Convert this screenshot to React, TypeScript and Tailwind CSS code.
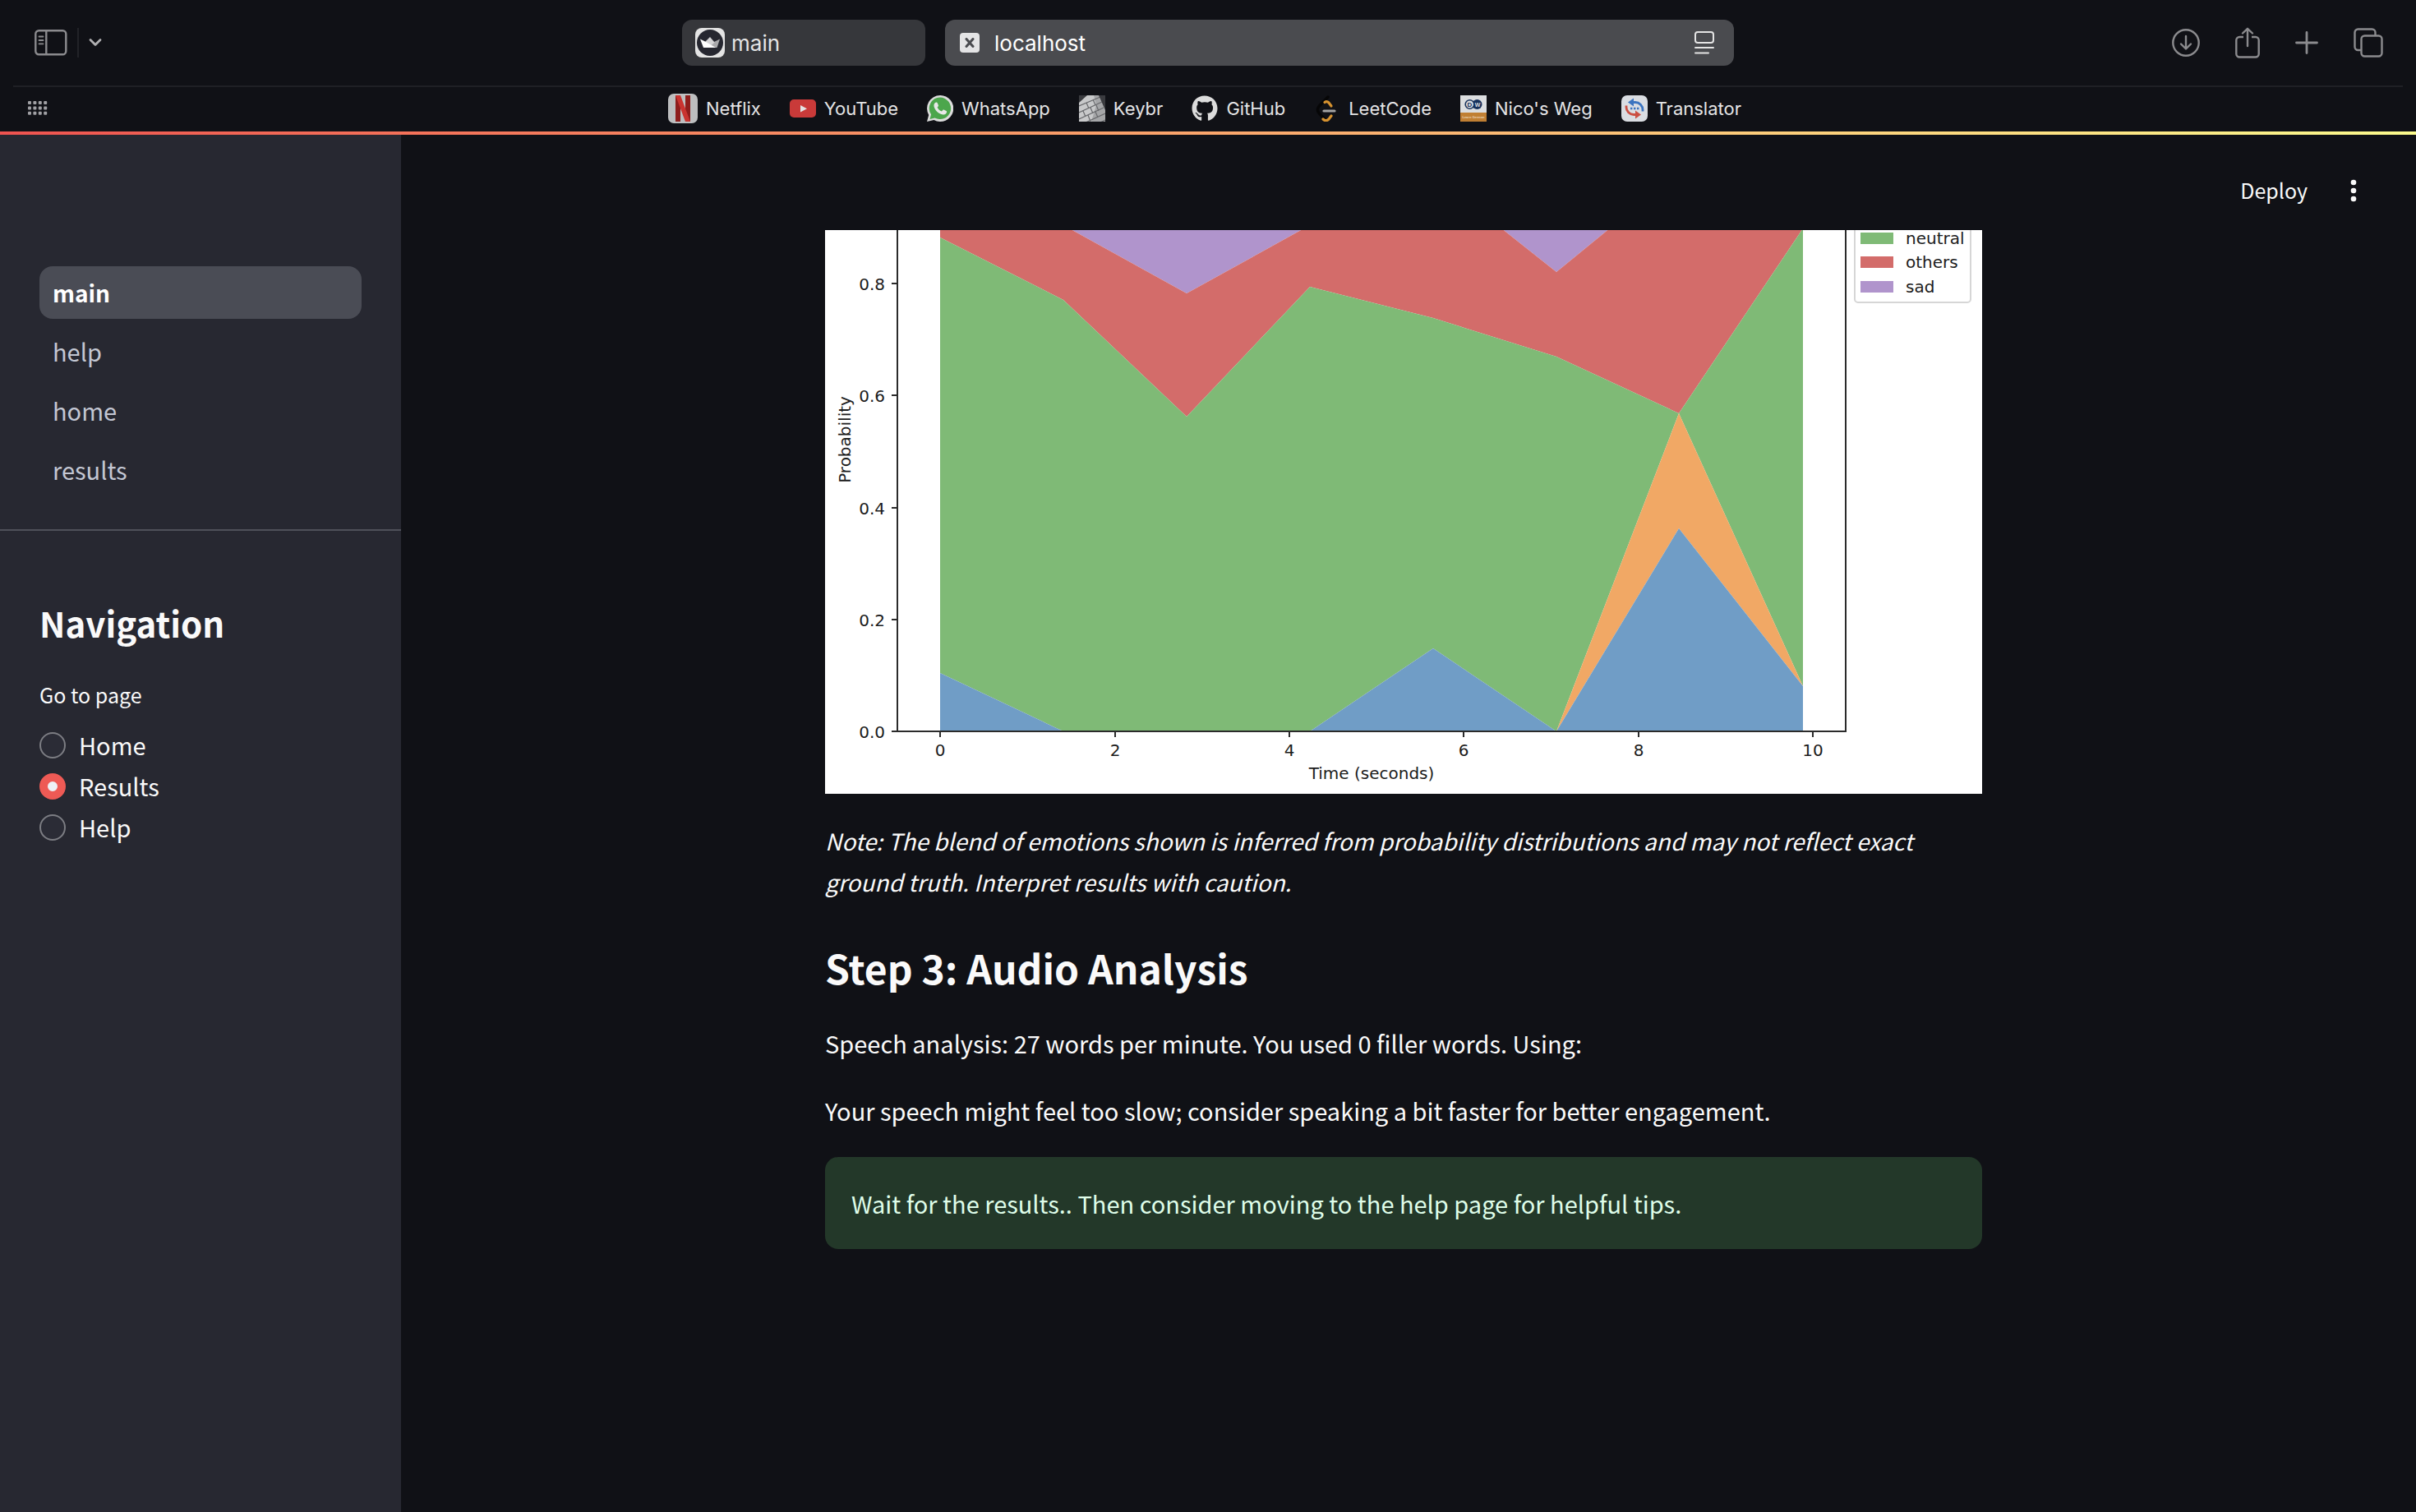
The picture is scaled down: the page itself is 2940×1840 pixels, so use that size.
import React from "react";
import { FaGithub } from "react-icons/fa";

const X = [140, 290, 440, 590, 740, 890, 1039, 1190];
const SAD_BASE = [-122, -6, 77, -6, -68, 51, -71, -71];
const OTHERS_BASE = [9, 85, 227, 69, 107, 154, 223, -2];
const NEUTRAL_BASE = [539, 610, 610, 610, 509, 610, 223, 555];
const BLUE_TOP = [539, 610, 610, 610, 509, 610, 363, 555];

function area(top: number[], bottom: number[]) {
  const upper = X.map((x, i) => `${x},${top[i]}`);
  const lower = X.map((x, i) => `${x},${bottom[i]}`).reverse();
  return [...upper, ...lower].join(" ");
}

const CEILING = X.map(() => -140);
const FLOOR = X.map(() => 610);

const Y_TICKS = [
  { label: "0.8", y: 65 },
  { label: "0.6", y: 201 },
  { label: "0.4", y: 338 },
  { label: "0.2", y: 474 },
  { label: "0.0", y: 610 },
];
const X_TICKS = [
  { label: "0", x: 140 },
  { label: "2", x: 353 },
  { label: "4", x: 565 },
  { label: "6", x: 777 },
  { label: "8", x: 990 },
  { label: "10", x: 1202 },
];
const LEGEND = [
  { label: "neutral", y: 3, color: "#7fba76" },
  { label: "others", y: 32, color: "#d36c6a" },
  { label: "sad", y: 62, color: "#b094cc" },
];

function EmotionChart() {
  return (
    <svg
      viewBox="0 0 1408 686"
      className="block w-full bg-white font-['DejaVu_Sans',sans-serif] text-[20px]"
      role="img"
      aria-label="Emotion probability over time"
    >
      <polygon points={area(CEILING, SAD_BASE)} fill="#b094cc" />
      <polygon points={area(SAD_BASE, OTHERS_BASE)} fill="#d36c6a" />
      <polygon points={area(OTHERS_BASE, NEUTRAL_BASE)} fill="#7fba76" />
      <polygon points={area(NEUTRAL_BASE, BLUE_TOP)} fill="#f1a865" />
      <polygon points={area(BLUE_TOP, FLOOR)} fill="#709dc6" />
      <path d="M88 0V610H1242V0" fill="none" stroke="#2b2b2b" strokeWidth="2" />
      {Y_TICKS.map((t) => (
        <g key={t.label}>
          <path d={`M81 ${t.y}H88`} stroke="#2b2b2b" strokeWidth="2" />
          <text x="73" y={t.y + 8} textAnchor="end" fill="#1c1c1c">
            {t.label}
          </text>
        </g>
      ))}
      {X_TICKS.map((t) => (
        <g key={t.label}>
          <path d={`M${t.x} 610V617`} stroke="#2b2b2b" strokeWidth="2" />
          <text x={t.x} y="640" textAnchor="middle" fill="#1c1c1c">
            {t.label}
          </text>
        </g>
      ))}
      <text x="665" y="668" textAnchor="middle" fill="#1c1c1c">
        Time (seconds)
      </text>
      <text transform="translate(31 255) rotate(-90)" textAnchor="middle" fill="#1c1c1c">
        Probability
      </text>
      <rect x="1253" y="-60" width="141" height="148" rx="4" fill="#fff" stroke="#d6d6d6" strokeWidth="2" />
      {LEGEND.map((l) => (
        <g key={l.label}>
          <rect x="1260" y={l.y} width="40" height="14" fill={l.color} />
          <text x="1315" y={l.y + 14} fill="#1c1c1c">
            {l.label}
          </text>
        </g>
      ))}
    </svg>
  );
}

const SidebarIcon = () => (
  <svg width="40" height="32" viewBox="0 0 40 32" fill="none" stroke="#8b8b8e" strokeWidth="2.4">
    <rect x="1.3" y="1.3" width="37" height="29" rx="4" />
    <path d="M14.3 1v30" />
    <path d="M5.5 8.5h5M5.5 13h5M5.5 17.3h5" strokeWidth="1.8" strokeLinecap="round" />
  </svg>
);

const ChevronIcon = () => (
  <svg width="16" height="12" viewBox="0 0 16 12" fill="none" stroke="#b0b0b2" strokeWidth="2.8">
    <path d="M2 2.5l6 6 6-6" strokeLinecap="round" strokeLinejoin="round" />
  </svg>
);

const GridIcon = () => (
  <svg width="24" height="18" viewBox="0 0 24 18" fill="#a0a0a4">
    {[0, 1, 2].map((r) =>
      [0, 1, 2, 3].map((c) => (
        <rect key={`${r}-${c}`} x={c * 6.4} y={r * 6.4} width="4" height="4" rx="1" />
      )),
    )}
  </svg>
);

const DownloadIcon = () => (
  <svg width="34" height="34" viewBox="0 0 34 34" fill="none" stroke="#8b8b8e" strokeWidth="2.4">
    <circle cx="17" cy="17" r="15.7" />
    <path d="M17 9v15M11 18.5l6 6 6-6" strokeLinecap="round" strokeLinejoin="round" />
  </svg>
);

const ShareIcon = () => (
  <svg width="30" height="38" viewBox="0 0 30 38" fill="none" stroke="#8b8b8e" strokeWidth="2.4">
    <path d="M10 12H5.3A4 4 0 0 0 1.3 16v16.5A4 4 0 0 0 5.3 36.500H24.700A4 4 0 0 0 28.700 32.500V16A4 4 0 0 0 24.700 12H20" />
    <path d="M15 23V2M9 7.500L15 1.800l6 5.700" strokeLinecap="round" strokeLinejoin="round" />
  </svg>
);

const PlusIcon = () => (
  <svg width="28" height="28" viewBox="0 0 28 28" fill="none" stroke="#8b8b8e" strokeWidth="2.8">
    <path d="M14 1.500V26.500M1.500 14H26.500" strokeLinecap="round" />
  </svg>
);

const TabsIcon = () => (
  <svg width="36" height="36" viewBox="0 0 36 36" fill="none" stroke="#8b8b8e" strokeWidth="2.4">
    <rect x="9.500" y="9.500" width="25" height="25" rx="4" />
    <path d="M9 27H5.500A4 4 0 0 1 1.500 23V5.500A4 4 0 0 1 5.500 1.500H22.500A4 4 0 0 1 26.500 5.500V9" />
  </svg>
);

const CrownIcon = () => (
  <svg width="36" height="36" viewBox="0 0 36 36">
    <rect width="36" height="36" rx="8" fill="#e4e4e4" />
    <circle cx="18" cy="18" r="16" fill="#262730" />
    <path d="M30 13.500L26.500 24H17l6-7z" fill="#a9a9ac" />
    <path d="M18 11l5.500 6.500L17 24l-5-7z" fill="#d4d4d6" />
    <path d="M6 13.500l7 3.500 12 7H10z" fill="#fff" />
  </svg>
);

const ReaderIcon = () => (
  <svg width="24" height="30" viewBox="0 0 24 30" fill="none" stroke="#e4e4e4" strokeWidth="2">
    <rect x="1" y="2" width="22" height="13" rx="3" />
    <path d="M1 21H23M1 27.500H17" strokeLinecap="round" />
  </svg>
);

const NetflixIcon = () => (
  <svg width="36" height="36" viewBox="0 0 36 36">
    <rect width="36" height="36" rx="7" fill="#bdbebf" />
    <path d="M9 2h6v32H9zM21 2h6v32h-6z" fill="#8e1d1c" />
    <path d="M9 2h6l12 32h-6z" fill="#c93330" />
  </svg>
);

const YouTubeIcon = () => (
  <svg width="32" height="32" viewBox="0 0 32 32">
    <rect y="5" width="32" height="22" rx="5" fill="#c93a39" />
    <path d="M13 12l8 4.200-8 4.200z" fill="#e4e4e4" />
  </svg>
);

const WhatsAppIcon = () => (
  <svg width="32" height="32" viewBox="0 0 32 32">
    <path d="M16 0a16 16 0 1 1-7.500 30L0 32l2.200-8A16 16 0 0 1 16 0z" fill="#dcdcdc" />
    <path d="M16 2.500a13.300 13.300 0 1 1-6.500 25L3.500 29l1.600-5.800A13.300 13.300 0 0 1 16 2.500z" fill="#4ca64c" />
    <path
      d="M11 8.500c.700-.200 1.400 0 1.700.700l1.200 2.900c.2.500 0 1-.3 1.400l-1 1.200c1.200 2.300 3 3.800 5.400 4.800l1.300-1.600c.3-.4.800-.5 1.300-.3l2.900 1.400c.6.300.8.800.6 1.500-.6 2.200-2.500 3.200-4.600 2.900-5.300-.9-10-5.200-11-10.200-.3-2.100.6-4 2.500-4.700z"
      fill="#e8e8e8"
    />
  </svg>
);

const KeybrIcon = () => (
  <svg width="32" height="32" viewBox="0 0 32 32" className="overflow-hidden">
    <rect width="32" height="32" fill="#a5a6a8" />
    <path d="M0 0h18L21 12l-6 20H0z" fill="#c8c9ca" />
    <path
      d="M0 13L26 2M0 21L28 8M0 29L30 15M6 34L32 22M20 36l12-6M9 9l3 7M17 5l3 7M5 19l3 7M14 15l3 7M21 12l3 7M11 24l3 8M20 20l3 7"
      stroke="#68696c"
      strokeWidth="1.200"
      fill="none"
    />
    <path d="M0 0h10L0 9zM24 0h8v18z" fill="#3a3b3f" />
  </svg>
);

const LeetCodeIcon = () => (
  <svg width="32" height="32" viewBox="0 0 32 32" fill="none" strokeLinecap="round">
    <path d="M17 2L6 13.500c-2 2.500-2 5.500 0 8L13 29" stroke="#060607" strokeWidth="3.500" />
    <path d="M13 8.500c2-1.500 3.500-1 5 .5L21 13" stroke="#d6922f" strokeWidth="3.200" />
    <path d="M11 29c2.500 2.500 5 2 7 0L21 25" stroke="#d6922f" strokeWidth="3.200" />
    <path d="M12 19H25" stroke="#a3a3a3" strokeWidth="3.200" />
  </svg>
);

const DwIcon = () => (
  <svg width="32" height="32" viewBox="0 0 32 32" className="font-['Liberation_Sans',sans-serif] font-bold">
    <rect width="32" height="32" fill="#dcdee0" />
    <rect y="21" width="32" height="11" fill="#c07f33" />
    <circle cx="20.500" cy="11" r="6" fill="#17315c" />
    <circle cx="11.500" cy="11" r="5.300" fill="#dcdee0" stroke="#17315c" strokeWidth="1.600" />
    <text x="11.500" y="14" textAnchor="middle" fontSize="8" fill="#17315c">
      D
    </text>
    <text x="21" y="14" textAnchor="middle" fontSize="7" fill="#dcdee0">
      W
    </text>
    <text x="16" y="28" textAnchor="middle" fontSize="4" fill="#e9d3b4">
      Learn German
    </text>
  </svg>
);

const TranslatorIcon = () => (
  <svg width="32" height="32" viewBox="0 0 32 32" fill="none">
    <rect width="32" height="32" rx="7" fill="#dadde2" />
    <path d="M14 8.500h3a9 9 0 0 1 9 9v2" stroke="#3b74c0" strokeWidth="2.800" />
    <path d="M8 8.500l7-5v10z" fill="#3b74c0" />
    <path d="M18 23.500h-3a9 9 0 0 1-9-9v-2" stroke="#cb4f42" strokeWidth="2.800" />
    <path d="M24 23.500l-7-5v10z" fill="#cb4f42" />
    <path d="M11 16h2.400M15 16h2.400M19 16h2.400" stroke="#3b74c0" strokeWidth="2.400" />
  </svg>
);

const BOOKMARKS = [
  { label: "Netflix", icon: <NetflixIcon /> },
  { label: "YouTube", icon: <YouTubeIcon /> },
  { label: "WhatsApp", icon: <WhatsAppIcon /> },
  { label: "Keybr", icon: <KeybrIcon /> },
  { label: "GitHub", icon: <FaGithub size={32} color="#dcdcdc" /> },
  { label: "LeetCode", icon: <LeetCodeIcon /> },
  { label: "Nico's Weg", icon: <DwIcon /> },
  { label: "Translator", icon: <TranslatorIcon /> },
];

function BrowserChrome() {
  return (
    <header className="font-[Inter,sans-serif] text-[#e4e4e5]">
      <div className="mx-4 grid h-[106px] grid-cols-[1fr_auto_1fr] items-center border-b-2 border-[#1f2025]">
        <div className="flex items-center gap-3 pl-[26px]">
          <button aria-label="Show sidebar">
            <SidebarIcon />
          </button>
          <span className="h-9 w-0.5 bg-[#222328]" />
          <button aria-label="Tab groups">
            <ChevronIcon />
          </button>
        </div>
        <div className="flex gap-6">
          <button className="flex h-14 w-[296px] items-center gap-2 rounded-xl bg-[#36373b] px-4 text-[26px]">
            <CrownIcon />
            main
          </button>
          <div className="flex h-14 w-[960px] items-center gap-[18px] rounded-xl bg-[#4a4b4f] px-[18px]">
            <button
              aria-label="Close tab"
              className="flex size-6 items-center justify-center rounded bg-[#e4e4e5]"
            >
              <svg width="12" height="12" viewBox="0 0 12 12" stroke="#4a4b4f" strokeWidth="3">
                <path d="M2 1.500l8 9M10 1.500l-8 9" strokeLinecap="round" />
              </svg>
            </button>
            <input
              aria-label="Address"
              defaultValue="localhost"
              className="min-w-0 flex-1 bg-transparent text-[26px] text-white outline-none"
            />
            <button aria-label="Reader" className="pr-1.5">
              <ReaderIcon />
            </button>
          </div>
        </div>
        <div className="flex items-center justify-end gap-[43px] pr-6">
          <button aria-label="Downloads">
            <DownloadIcon />
          </button>
          <button aria-label="Share">
            <ShareIcon />
          </button>
          <button aria-label="New tab">
            <PlusIcon />
          </button>
          <button aria-label="Tab overview">
            <TabsIcon />
          </button>
        </div>
      </div>
      <div className="grid h-[54px] grid-cols-[1fr_auto_1fr] items-center pr-[42px] pb-0.5 pl-[34px]">
        <button aria-label="Start page" className="justify-self-start">
          <GridIcon />
        </button>
        <nav className="flex items-center gap-[35px] text-[22px]">
          {BOOKMARKS.map((b) => (
            <a key={b.label} href="#" className="flex items-center gap-[10px]">
              {b.icon}
              {b.label}
            </a>
          ))}
        </nav>
        <span />
      </div>
      <div className="h-1 bg-linear-to-r from-[#ef5350] via-[#fba66c] to-[#fbfb8d]" />
    </header>
  );
}

const PAGES = ["main", "help", "home", "results"];
const RADIOS = ["Home", "Results", "Help"];

function Sidebar() {
  return (
    <aside className="w-[488px] shrink-0 bg-[#272831]">
      <nav className="flex flex-col gap-2 px-12 pt-40 pb-10">
        {PAGES.map((p, i) => (
          <a
            key={p}
            href="#"
            className={
              i === 0
                ? "flex h-16 items-center rounded-2xl bg-[#4a4c55] px-4 text-[28px] font-bold text-white"
                : "flex h-16 items-center rounded-2xl px-4 text-[#c3c7d3]"
            }
          >
            {p}
          </a>
        ))}
      </nav>
      <div className="border-t-2 border-[#4f515a] px-12 pt-20">
        <h2 className="text-[42px] leading-[64px] font-bold">Navigation</h2>
        <fieldset className="pt-8">
          <legend className="contents text-[25px] leading-[40px]">Go to page</legend>
          <div className="flex flex-col pt-4">
            {RADIOS.map((r) => (
              <label key={r} className="flex h-[50px] items-center gap-4">
                <input
                  type="radio"
                  name="page"
                  defaultChecked={r === "Results"}
                  className="size-8 appearance-none rounded-full border-2 border-[#7c7d83] bg-[#2b2c36] checked:border-[10px] checked:border-[#ee5a55] checked:bg-[#eef0f5]"
                />
                {r}
              </label>
            ))}
          </div>
        </fieldset>
      </div>
    </aside>
  );
}

export default function App() {
  return (
    <div className="flex h-screen flex-col overflow-hidden bg-[#101116] font-['Noto_Sans_CJK_SC',sans-serif] text-[29px] text-[#fafafa]">
      <BrowserChrome />
      <div className="flex min-h-0 flex-1">
        <Sidebar />
        <div className="flex min-w-0 flex-1 flex-col">
          <div className="flex h-[116px] shrink-0 items-center justify-end gap-10 pt-5 pr-[60px] text-[25px]">
            <button>Deploy</button>
            <button aria-label="Main menu" className="px-3">
              <svg width="8" height="28" viewBox="0 0 8 28" fill="#fafafa">
                <circle cx="4" cy="4" r="3.300" />
                <circle cx="4" cy="14" r="3.300" />
                <circle cx="4" cy="24" r="3.300" />
              </svg>
            </button>
          </div>
          <main className="min-h-0 flex-1 overflow-hidden pr-3">
            <div className="mx-auto flex max-w-[1408px] flex-col gap-8 leading-[50px]">
              <EmotionChart />
              <p className="text-[28px] italic">
                Note: The blend of emotions shown is inferred from probability distributions and may not reflect exact
                ground truth. Interpret results with caution.
              </p>
              <h2 className="pt-3 text-[48px] leading-[70px] font-bold">Step 3: Audio Analysis</h2>
              <p>Speech analysis: 27 words per minute. You used 0 filler words. Using:</p>
              <p>Your speech might feel too slow; consider speaking a bit faster for better engagement.</p>
              <div className="rounded-2xl bg-[#233829] px-8 py-8 leading-[48px] text-[#dffde9]">
                Wait for the results.. Then consider moving to the help page for helpful tips.
              </div>
            </div>
          </main>
        </div>
      </div>
    </div>
  );
}
